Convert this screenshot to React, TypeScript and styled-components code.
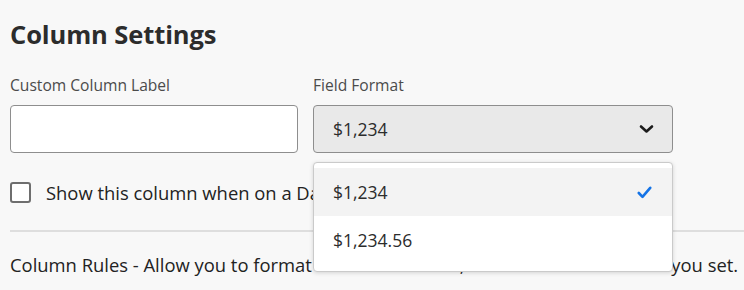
import React from "react";
import styled, { createGlobalStyle } from "styled-components";

const Global = createGlobalStyle`
  html, body { margin: 0; padding: 0; background: #f8f8f8; }
  body { font-family: "Open Sans", "Noto Sans", sans-serif; color: #2c2c2c; }
  * { box-sizing: border-box; }
`;

const Page = styled.div`
  padding: 16px 10px 0 10px;
  width: 744px;
  height: 290px;
  overflow: hidden;
`;

const Title = styled.h2`
  margin: 0;
  font-size: 25.5px;
  line-height: 36px;
  font-weight: 700;
  letter-spacing: -0.1px;
  color: #2c2c2c;
`;

const FieldsRow = styled.div`
  display: flex;
  gap: 15px;
  margin-top: 23px;
`;

const Field = styled.div<{ $w: number }>`
  position: relative;
  width: ${(p) => p.$w}px;
  display: flex;
  flex-direction: column;
`;

const Label = styled.label`
  font-size: 15.6px;
  line-height: 20px;
  color: #4b4b4b;
  margin-bottom: 10px;
`;

const TextInput = styled.input`
  height: 48px;
  width: 100%;
  border: 1px solid #8e8e8e;
  border-radius: 4px;
  background: #fff;
  font: inherit;
  padding: 0 19px;
`;

const SelectButton = styled.div`
  height: 48px;
  border: 1px solid #8e8e8e;
  border-radius: 4px;
  background: #e9e9e9;
  display: flex;
  align-items: center;
  justify-content: space-between;
  padding: 0 18px 0 19px;
  font-size: 17.5px;
  color: #2c2c2c;
`;

const Popover = styled.ul`
  position: absolute;
  top: 87px;
  left: 0;
  width: 100%;
  margin: 0;
  padding: 5px 0 7px 0;
  list-style: none;
  background: #fff;
  border: 1px solid #cacaca;
  border-radius: 4px;
  box-shadow: 0 1px 4px rgba(0, 0, 0, 0.15);
  z-index: 2;
`;

const Option = styled.li<{ $active?: boolean }>`
  height: 48px;
  display: flex;
  align-items: center;
  justify-content: space-between;
  padding: 0 20px 0 19px;
  font-size: 17.5px;
  color: #2c2c2c;
  background: ${(p) => (p.$active ? "#f3f3f3" : "#fff")};
`;

const CheckRow = styled.div`
  display: flex;
  align-items: center;
  gap: 15px;
  margin-top: 29px;
  height: 21px;
`;

const Box = styled.span`
  width: 21px;
  height: 21px;
  border: 2px solid #6e6e6e;
  border-radius: 3px;
  background: #fff;
`;

const BodyText = styled.span`
  font-size: 18.4px;
  color: #222;
  white-space: nowrap;
`;

const Divider = styled.hr`
  border: none;
  height: 2px;
  background: #dedede;
  margin: 27px -10px 0 0;
`;

const Rules = styled.p`
  margin: 21px 0 0 0;
  font-size: 18.4px;
  line-height: 24px;
  color: #222;
  white-space: nowrap;
`;

const Chevron = () => (
  <svg width="15" height="10" viewBox="0 0 15 10">
    <path d="M2 2.5 L7.5 7.5 L13 2.5" fill="none" stroke="#1b1b1b" strokeWidth="2.6" strokeLinecap="round" strokeLinejoin="round" />
  </svg>
);

const Check = () => (
  <svg width="15" height="13" viewBox="0 0 15 13">
    <path d="M1.8 7 L5.5 10.8 L13.2 1.8" fill="none" stroke="#1473e6" strokeWidth="2.6" strokeLinecap="round" strokeLinejoin="round" />
  </svg>
);

export default function App() {
  return (
    <>
      <Global />
      <Page>
        <Title>Column Settings</Title>
        <FieldsRow>
          <Field $w={288}>
            <Label>Custom Column Label</Label>
            <TextInput />
          </Field>
          <Field $w={360}>
            <Label>Field Format</Label>
            <SelectButton>
              <span>$1,234</span>
              <Chevron />
            </SelectButton>
            <Popover>
              <Option $active>
                <span>$1,234</span>
                <Check />
              </Option>
              <Option>
                <span>$1,234.56</span>
              </Option>
            </Popover>
          </Field>
        </FieldsRow>
        <CheckRow>
          <Box />
          <BodyText>Show this column when on a Dashboard</BodyText>
        </CheckRow>
        <Divider />
        <Rules>Column Rules - Allow you to format cells of a column, based on all conditions you set.</Rules>
      </Page>
    </>
  );
}
